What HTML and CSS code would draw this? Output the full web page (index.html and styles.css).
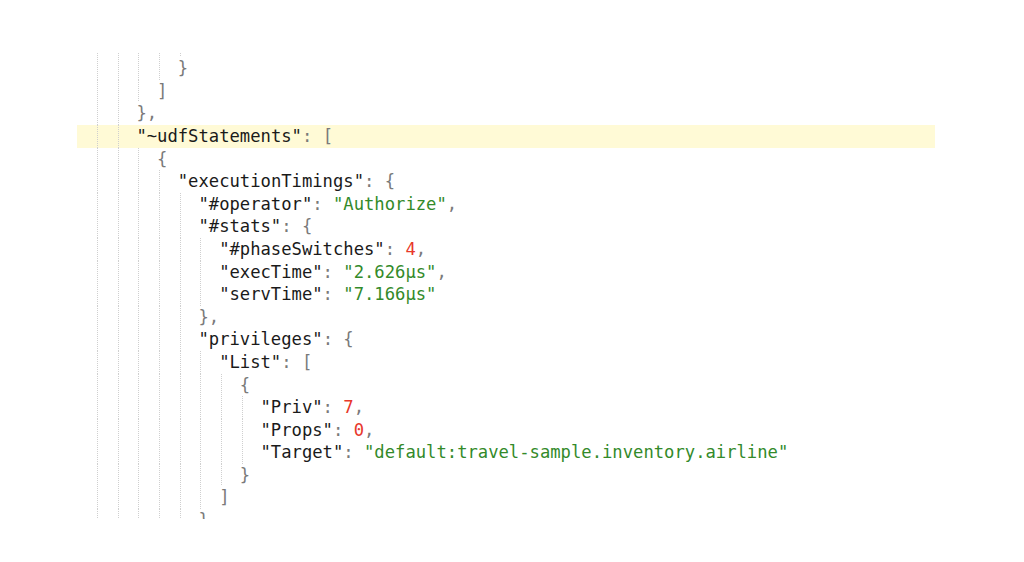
FILE: index.html
```html
<!DOCTYPE html>
<html lang="en">
<head>
<meta charset="utf-8">
<title>JSON viewer</title>
<link rel="stylesheet" href="styles.css">
</head>
<body>
<div class="editor">
  <div class="scroller">
    <div class="line"><span class="ind"></span><span class="ind"></span><span class="ind"></span><span class="ind"></span><span class="ind"></span><span class="code"></span></div>
    <div class="line"><span class="ind"></span><span class="ind"></span><span class="ind"></span><span class="ind"></span><span class="code"><span class="p">}</span></span></div>
    <div class="line"><span class="ind"></span><span class="ind"></span><span class="ind"></span><span class="code"><span class="p">]</span></span></div>
    <div class="line"><span class="ind"></span><span class="ind"></span><span class="code"><span class="p">},</span></span></div>
    <div class="line active"><span class="ind"></span><span class="ind"></span><span class="code"><span class="k">"~udfStatements"</span><span class="p">: [</span></span></div>
    <div class="line"><span class="ind"></span><span class="ind"></span><span class="ind"></span><span class="code"><span class="p">{</span></span></div>
    <div class="line"><span class="ind"></span><span class="ind"></span><span class="ind"></span><span class="ind"></span><span class="code"><span class="k">"executionTimings"</span><span class="p">: {</span></span></div>
    <div class="line"><span class="ind"></span><span class="ind"></span><span class="ind"></span><span class="ind"></span><span class="ind"></span><span class="code"><span class="k">"#operator"</span><span class="p">: </span><span class="s">"Authorize"</span><span class="p">,</span></span></div>
    <div class="line"><span class="ind"></span><span class="ind"></span><span class="ind"></span><span class="ind"></span><span class="ind"></span><span class="code"><span class="k">"#stats"</span><span class="p">: {</span></span></div>
    <div class="line"><span class="ind"></span><span class="ind"></span><span class="ind"></span><span class="ind"></span><span class="ind"></span><span class="ind"></span><span class="code"><span class="k">"#phaseSwitches"</span><span class="p">: </span><span class="n">4</span><span class="p">,</span></span></div>
    <div class="line"><span class="ind"></span><span class="ind"></span><span class="ind"></span><span class="ind"></span><span class="ind"></span><span class="ind"></span><span class="code"><span class="k">"execTime"</span><span class="p">: </span><span class="s">"2.626µs"</span><span class="p">,</span></span></div>
    <div class="line"><span class="ind"></span><span class="ind"></span><span class="ind"></span><span class="ind"></span><span class="ind"></span><span class="ind"></span><span class="code"><span class="k">"servTime"</span><span class="p">: </span><span class="s">"7.166µs"</span></span></div>
    <div class="line"><span class="ind"></span><span class="ind"></span><span class="ind"></span><span class="ind"></span><span class="ind"></span><span class="code"><span class="p">},</span></span></div>
    <div class="line"><span class="ind"></span><span class="ind"></span><span class="ind"></span><span class="ind"></span><span class="ind"></span><span class="code"><span class="k">"privileges"</span><span class="p">: {</span></span></div>
    <div class="line"><span class="ind"></span><span class="ind"></span><span class="ind"></span><span class="ind"></span><span class="ind"></span><span class="ind"></span><span class="code"><span class="k">"List"</span><span class="p">: [</span></span></div>
    <div class="line"><span class="ind"></span><span class="ind"></span><span class="ind"></span><span class="ind"></span><span class="ind"></span><span class="ind"></span><span class="ind"></span><span class="code"><span class="p">{</span></span></div>
    <div class="line"><span class="ind"></span><span class="ind"></span><span class="ind"></span><span class="ind"></span><span class="ind"></span><span class="ind"></span><span class="ind"></span><span class="ind"></span><span class="code"><span class="k">"Priv"</span><span class="p">: </span><span class="n">7</span><span class="p">,</span></span></div>
    <div class="line"><span class="ind"></span><span class="ind"></span><span class="ind"></span><span class="ind"></span><span class="ind"></span><span class="ind"></span><span class="ind"></span><span class="ind"></span><span class="code"><span class="k">"Props"</span><span class="p">: </span><span class="n">0</span><span class="p">,</span></span></div>
    <div class="line"><span class="ind"></span><span class="ind"></span><span class="ind"></span><span class="ind"></span><span class="ind"></span><span class="ind"></span><span class="ind"></span><span class="ind"></span><span class="code"><span class="k">"Target"</span><span class="p">: </span><span class="s">"default:travel-sample.inventory.airline"</span></span></div>
    <div class="line"><span class="ind"></span><span class="ind"></span><span class="ind"></span><span class="ind"></span><span class="ind"></span><span class="ind"></span><span class="ind"></span><span class="code"><span class="p">}</span></span></div>
    <div class="line"><span class="ind"></span><span class="ind"></span><span class="ind"></span><span class="ind"></span><span class="ind"></span><span class="ind"></span><span class="code"><span class="p">]</span></span></div>
    <div class="line"><span class="ind"></span><span class="ind"></span><span class="ind"></span><span class="ind"></span><span class="ind"></span><span class="code"><span class="p">}</span></span></div>
  </div>
</div>
</body>
</html>
```
FILE: styles.css
```css
html, body {
  margin: 0;
  padding: 0;
  background: #ffffff;
}

.editor {
  margin: 53px 0 0 77px;
  width: 858px;
  height: 465.5px;
  overflow: hidden;
  font-family: "DejaVu Sans Mono", "Liberation Mono", monospace;
  font-size: 17.2px;
  color: #1a1a1a;
}

.scroller {
  margin-top: -18.4px;
}

.line {
  display: flex;
  align-items: stretch;
  height: 22.6px;
  padding-left: 18px;
}

.line.active {
  background: #fffad6;
}

.ind {
  flex: 0 0 2ch;
  width: 2ch;
  background-image: linear-gradient(#cfcfcf 50%, transparent 50%);
  background-size: 1px 2px;
  background-position: 2px 0;
  background-repeat: repeat-y;
}

.code {
  white-space: pre;
  line-height: 22.6px;
}

.k { color: #1a1a1a; }
.p { color: #7a7a7a; }
.s { color: #338a2a; }
.n { color: #e8382b; }
```
